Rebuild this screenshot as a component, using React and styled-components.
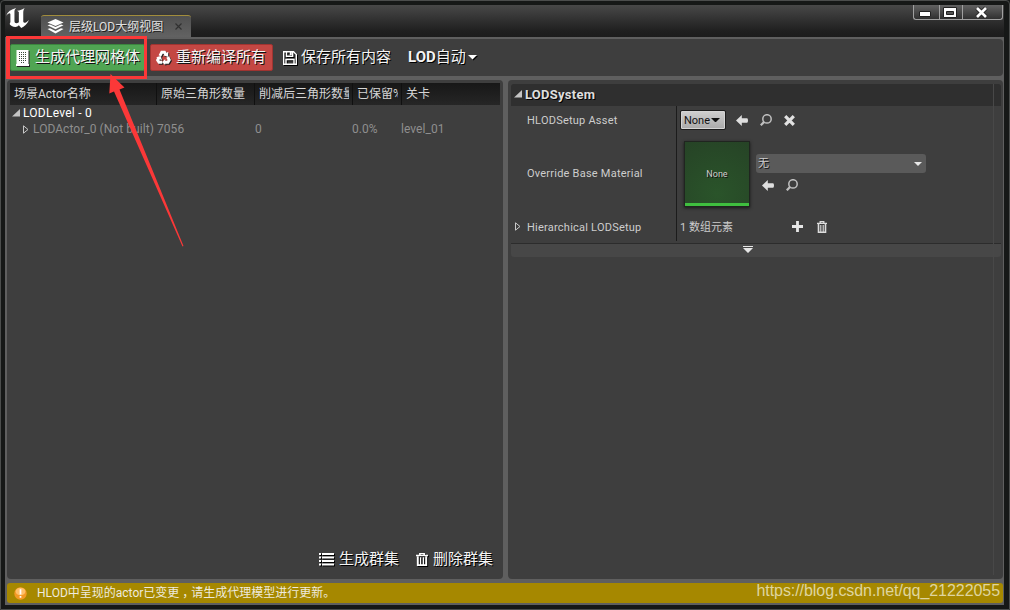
import styled, { createGlobalStyle } from "styled-components";

const GlobalStyle = createGlobalStyle`
    body{
        margin: 0;
        background: #161817;
        overflow: hidden;
    }

    *{
        box-sizing: border-box;
    }

    svg{
        display: block;
        flex-shrink: 0;
    }
`;

const UnrealLogo = () => (
    <svg width="23" height="20" viewBox="0 0 68 60" preserveAspectRatio="none" fill="#fff">
        <path d="M0 24C5 11 15 4 30 0C26 4 25 7 25 11V39C25 46 31 48 38 43V12L33 8C41 8 49 4 55 0C52 5 51 9 51 14V40C51 46 57 47 68 36C63 49 54 55 45 60L38 52C32 59 24 57 17 54C10 51 10 47 13 43V19C12 13 6 17 0 24Z" />
    </svg>
);

const LayersIcon = () => (
    <svg width="17" height="15" viewBox="0 0 17 15" fill="#fff">
        <path d="M8.500 0L16.500 3.500L8.500 7L.500 3.500Z" />
        <path d="M.500 6.200L3 5.400L8.500 8.100L14 5.400L16.500 6.200L8.500 10.300Z" />
        <path d="M.500 10L3 9.200L8.500 11.900L14 9.200L16.500 10L8.500 14.400Z" />
    </svg>
);

const BuildingIcon = () => (
    <svg width="13" height="16" viewBox="0 0 13 16">
        <path d="M.500 0H12.500V14H13V16H0V14H.500Z" fill="#fff" />
        <path d="M3 2.500H11M3 4.500H11M3 6.500H11M3 8.500H11M3 10.500H11M5 12.500H9" stroke="#3b4b3b" strokeDasharray="1 1" />
    </svg>
);

const RecycleIcon = () => (
    <svg width="15" height="15" viewBox="0 0 16 16" fill="none" stroke="#fff" strokeWidth="3.200">
        <path d="M4.200 6.200L6.200 2.300H9L10.500 4.700" />
        <path d="M12.500 7.500L14.100 10.700L12.700 13H9.300" />
        <path d="M6.600 13H3.200L1.800 10.800L3.200 8.200" />
        <path d="M13 1.800V7.400L7.700 5.600ZM9.800 9.500V16L6.500 13ZM.100 7.600L5 6.300L6.400 11Z" fill="#fff" stroke="none" />
    </svg>
);

const SaveIcon = () => (
    <svg width="14" height="14" viewBox="0 0 14 14" fill="none" stroke="#fff" strokeWidth="1.400">
        <path d="M.700 .700H10.500L13.300 3.500V13.300H.700Z" />
        <path d="M3.500 1V5.300H9.700V1M3 13V8.500H11V13" />
        <path d="M7.800 1V4" strokeWidth="2" />
    </svg>
);

const Caret = ({ color = "#fff", size = 8 }) => (
    <svg width={size} height={size / 2} viewBox="0 0 8 4" fill={color}>
        <path d="M0 0H8L4 4Z" />
    </svg>
);

const OpenArrow = () => (
    <svg width="8" height="8" viewBox="0 0 8 8" fill="#c4c4c4">
        <path d="M8 0V7.500H0Z" />
    </svg>
);

const ClosedArrow = () => (
    <svg width="6" height="9" viewBox="0 0 6 9" fill="none" stroke="#c8c8c8">
        <path d="M.500 .800V8.200L5 4.500Z" />
    </svg>
);

const BackIcon = () => (
    <svg width="12" height="11" viewBox="0 0 12 11" fill="#dedede">
        <path d="M0 5.500L5.800 0V3.200H11Q12 3.200 12 5.500Q12 7.800 11 7.800H5.800V11Z" />
    </svg>
);

const SearchIcon = () => (
    <svg width="12" height="12" viewBox="0 0 12 12" fill="none" stroke="#c0c0c0">
        <circle cx="7" cy="4.900" r="4.200" strokeWidth="1.500" />
        <path d="M4 8L.800 11.300" strokeWidth="2.200" />
    </svg>
);

const ClearIcon = () => (
    <svg width="11" height="11" viewBox="0 0 11 11" stroke="#e2e2e2" strokeWidth="3.200">
        <path d="M1.200 1.200L9.800 9.800M9.800 1.200L1.200 9.800" />
    </svg>
);

const PlusIcon = () => (
    <svg width="11" height="11" viewBox="0 0 11 11" stroke="#e6e6e6" strokeWidth="2.800">
        <path d="M5.500 0V11M0 5.500H11" />
    </svg>
);

const TrashIcon = ({ color = "#dcdcdc", width = 10, height = 12 }) => (
    <svg width={width} height={height} viewBox="0 0 10 12" preserveAspectRatio="none" fill="none" stroke={color}>
        <path d="M0 2.300H10M3.200 2V.600H6.800V2" strokeWidth="1.300" />
        <path d="M1.500 3V11.200H8.500V3" strokeWidth="1.600" />
        <path d="M3.800 4V11M6.200 4V11" strokeWidth="1.100" />
    </svg>
);

const ListIcon = () => (
    <svg width="15" height="13" viewBox="0 0 15 13" fill="#fff">
        <path d="M0 0H2V2H0ZM3 0H15V2H3ZM0 3.500H2V5.500H0ZM3 3.500H15V5.500H3ZM0 7H2V9H0ZM3 7H15V9H3ZM0 10.500H2V12.500H0ZM3 10.500H15V12.500H3Z" />
    </svg>
);

const WarningIcon = () => (
    <svg width="13" height="13" viewBox="0 0 13 13">
        <circle cx="6.500" cy="6.500" r="6.200" fill="#f39a25" />
        <ellipse cx="6.500" cy="4.500" rx="4.900" ry="3.800" fill="#ffc069" />
        <path d="M6.500 2.300V7.500M6.500 9V10.800" stroke="#fff" strokeWidth="1.700" />
    </svg>
);

const App = () => {
    return (
        <Window>
            <GlobalStyle />
            <TitleBar>
                <Logo><UnrealLogo /></Logo>
                <Tab>
                    <LayersIcon />
                    <span>层级LOD大纲视图</span>
                    <svg width="7" height="7" viewBox="0 0 7 7" stroke="#303030" strokeWidth="1.200">
                        <path d="M.500 .500L6.500 6.500M6.500 .500L.500 6.500" />
                    </svg>
                </Tab>
                <Controls>
                    <Control $width={26}>
                        <svg width="12" height="6" viewBox="0 0 12 6">
                            <path d="M.500 .500H11.500V5.500H.500Z" fill="#fff" stroke="#222" />
                        </svg>
                    </Control>
                    <Control $width={23}>
                        <svg width="14" height="11" viewBox="0 0 14 11">
                            <path d="M.500 .500H13.500V10.500H.500Z" fill="#fff" stroke="#222" />
                            <path d="M3.500 4.500H10.500V7.500H3.500Z" fill="#555" stroke="#222" />
                        </svg>
                    </Control>
                    <Control $width={41}>
                        <svg width="13" height="13" viewBox="0 0 13 13">
                            <path d="M2 2L11 11M11 2L2 11" stroke="#222" strokeWidth="4.500" />
                            <path d="M2 2L11 11M11 2L2 11" stroke="#fff" strokeWidth="2.700" />
                        </svg>
                    </Control>
                </Controls>
            </TitleBar>

            <Body>
                <Toolbar>
                    <ToolButton $width={135} $gap={6} $color="#50a553" $edge="#3c853f">
                        <BuildingIcon />
                        <span>生成代理网格体</span>
                    </ToolButton>
                    <ToolButton $width={123} $gap={5} $color="#c44743" $edge="#a03431">
                        <RecycleIcon />
                        <span>重新编译所有</span>
                    </ToolButton>
                    <ToolLink $gap={4}>
                        <SaveIcon />
                        <span>保存所有内容</span>
                    </ToolLink>
                    <ToolLink $gap={2}>
                        <span><b>LOD</b>自动</span>
                        <Caret size={9} />
                    </ToolLink>
                </Toolbar>

                <Panels>
                    <Outliner>
                        <TreeHeader>
                            <HeaderCell>场景Actor名称</HeaderCell>
                            <HeaderCell>原始三角形数量</HeaderCell>
                            <HeaderCell>削减后三角形数量</HeaderCell>
                            <HeaderCell>已保留%</HeaderCell>
                            <HeaderCell>关卡</HeaderCell>
                        </TreeHeader>
                        <TreeRow $bright>
                            <NameCell $indent={2} $gap={3}>
                                <OpenArrow />
                                <span>LODLevel - 0</span>
                            </NameCell>
                        </TreeRow>
                        <TreeRow>
                            <NameCell $indent={13} $gap={4}>
                                <ClosedArrow />
                                <span>LODActor_0 (Not built)</span>
                            </NameCell>
                            <span>7056</span>
                            <span>0</span>
                            <span>0.0%</span>
                            <span>level_01</span>
                        </TreeRow>
                        <ClusterActions>
                            <ToolLink $gap={5}>
                                <ListIcon />
                                <span>生成群集</span>
                            </ToolLink>
                            <ToolLink $gap={5}>
                                <TrashIcon color="#fff" width={12} height={13} />
                                <span>删除群集</span>
                            </ToolLink>
                        </ClusterActions>
                    </Outliner>

                    <Details>
                        <DetailsContent>
                            <Category>
                                <OpenArrow />
                                <span>LODSystem</span>
                            </Category>
                            <Property $height={28}>
                                <PropertyName>HLODSetup Asset</PropertyName>
                                <PropertyValue>
                                    <AssetButton>
                                        None
                                        <Caret color="#111" size={9} />
                                    </AssetButton>
                                    <IconRow $gap={12}>
                                        <BackIcon />
                                        <SearchIcon />
                                        <ClearIcon />
                                    </IconRow>
                                </PropertyValue>
                            </Property>
                            <Property $height={78}>
                                <PropertyName>Override Base Material</PropertyName>
                                <PropertyValue>
                                    <Thumbnail>None</Thumbnail>
                                    <MaterialPicker>
                                        <Combo>
                                            <span>无</span>
                                            <Caret color="#e8e8e8" />
                                        </Combo>
                                        <IconRow $gap={12}>
                                            <BackIcon />
                                            <SearchIcon />
                                        </IconRow>
                                    </MaterialPicker>
                                </PropertyValue>
                            </Property>
                            <Property $height={29}>
                                <PropertyName $expandable>
                                    <ClosedArrow />
                                    <span>Hierarchical LODSetup</span>
                                </PropertyName>
                                <PropertyValue>
                                    <ArrayCount>1 数组元素</ArrayCount>
                                    <IconRow $gap={14}>
                                        <PlusIcon />
                                        <TrashIcon />
                                    </IconRow>
                                </PropertyValue>
                            </Property>
                            <Expander>
                                <svg width="10" height="7" viewBox="0 0 10 7" fill="#e6e6e6">
                                    <path d="M0 0H10V1H0ZM0 2H10L5 7Z" />
                                </svg>
                            </Expander>
                        </DetailsContent>
                        <ScrollTrack />
                    </Details>
                </Panels>

                <StatusBar>
                    <WarningIcon />
                    <Message>HLOD中呈现的actor已变更<Comma>，</Comma>请生成代理模型进行更新。</Message>
                    <Watermark>https://blog.csdn.net/qq_21222055</Watermark>
                </StatusBar>
            </Body>

            <Highlight />
            <Pointer width="76" height="176" viewBox="0 0 76 176" fill="#fb3838">
                <path d="M2.500 2L16.500 15.500L11.500 17.500L75.500 174L74.500 174.500L6 19.500L1.300 21.500Z" />
            </Pointer>
        </Window>
    );
};

const Window = styled.div`
    position: relative;
    display: flex;
    flex-direction: column;
    width: 1010px;
    height: 610px;
    padding: 4px 5px 4px 4px;
    border: 1px solid #4b4d4c;
    border-radius: 4px 4px 0 0;
    background: #161817;
    font-family: Roboto, "Noto Sans CJK SC", sans-serif;
    font-size: 12px;
    color: #e0e0e0;
    white-space: nowrap;
`;

const TitleBar = styled.div`
    display: flex;
    height: 32px;
    background: linear-gradient(#484848, #202020 80%, #1c1c1c);
`;

const Logo = styled.div`
    width: 36px;
    padding: 3px 0 0 1px;
`;

const Tab = styled.div`
    display: flex;
    align-items: center;
    width: 150px;
    height: 22px;
    margin-top: 10px;
    padding-left: 6px;
    border-top: 1px solid #a28d3c;
    border-radius: 3px 3px 0 0;
    background: linear-gradient(#505050, #626262);
    text-shadow: 1px 1px #202020;

    span{
        width: 95px;
        margin: 0 11px 0 5px;
        padding-bottom: 3px;
    }
`;

const Controls = styled.div`
    display: flex;
    height: 15px;
    margin: 0 1px 0 auto;
`;

const Control = styled.div`
    display: flex;
    align-items: center;
    justify-content: center;
    width: ${(props) => props.$width}px;
    padding: 1px 3px 0 0;
    border: 1px solid #a0a0a0;
    border-top: 0;
    border-right-width: 0;
    background: linear-gradient(#626262, #303030);

    &:first-child{
        padding: 4px 3px 0 0;
        border-bottom-left-radius: 3px;
    }

    &:nth-child(2){
        padding-right: 2px;
    }

    &:last-child{
        border-right-width: 1px;
        border-bottom-right-radius: 3px;
    }
`;

const Body = styled.div`
    display: flex;
    flex-direction: column;
    flex: 1;
    padding: 2px 1px 2px 2px;
    background: #5f5f5f;
`;

const Toolbar = styled.div`
    display: flex;
    align-items: center;
    height: 37px;
    padding-left: 3px;
    border-radius: 4px;
    background: #3e3e3e;
`;

const ToolButton = styled.div`
    display: flex;
    align-items: center;
    gap: ${(props) => props.$gap}px;
    width: ${(props) => props.$width}px;
    height: 27px;
    margin-right: 5px;
    padding-left: 5px;
    border: 1px solid ${(props) => props.$edge};
    border-radius: 2px;
    background: ${(props) => props.$color};
    color: #f4f4f4;
    font-size: 15px;
    text-shadow: 1px 1px #111;

    span{
        padding-bottom: 4px;
    }

    svg{
        filter: drop-shadow(1px 1px 0 #222);
    }
`;

const ToolLink = styled.div`
    display: flex;
    align-items: center;
    gap: ${(props) => props.$gap}px;
    margin: 0 12px 0 5px;
    color: #f4f4f4;
    font-size: 15px;
    text-shadow: 1px 1px #000;

    span{
        padding-bottom: 4px;
    }

    svg{
        filter: drop-shadow(1px 1px 0 #000);
    }
`;

const Panels = styled.div`
    display: grid;
    grid-template-columns: 496px 1fr;
    gap: 5px;
    height: 499px;
    margin-top: 4px;
`;

const Outliner = styled.div`
    display: flex;
    flex-direction: column;
    padding: 3px;
    border-radius: 4px;
    background: #3e3e3e;
`;

const TreeHeader = styled.div`
    display: grid;
    grid-template-columns: 146px 98px 98px 49px 1fr;
    height: 22px;
    background: linear-gradient(#171717, #262626);
`;

const HeaderCell = styled.div`
    padding-left: 4px;
    line-height: 22px;
    overflow: hidden;
    border-left: 1px solid #101010;
    border-right: 3px solid transparent;
    color: #d6d6d6;

    &:first-child{
        border-left: 0;
    }
`;

const TreeRow = styled.div`
    display: grid;
    grid-template-columns: 147px 98px 97px 49px 1fr;
    height: 16px;
    line-height: 16px;
    color: ${(props) => (props.$bright ? "#fff" : "#8f8f8f")};
    letter-spacing: ${(props) => (props.$bright ? ".25px" : ".05px")};
`;

const NameCell = styled.div`
    display: flex;
    align-items: center;
    gap: ${(props) => props.$gap}px;
    padding-left: ${(props) => props.$indent}px;
`;

const ClusterActions = styled.div`
    display: flex;
    justify-content: flex-end;
    margin-top: auto;
    padding-bottom: 4px;

    ${ToolLink}:last-child{
        margin-right: 7px;
    }
`;

const Details = styled.div`
    display: grid;
    grid-template-columns: 490px;
    padding: 4px 2px 4px 3px;
    border-radius: 4px;
    background: #3e3e3e;
    font-size: 11px;
    position: relative;
`;

const DetailsContent = styled.div`
    color: #cdcdcd;
`;

const Category = styled.div`
    display: flex;
    align-items: center;
    gap: 3px;
    height: 22px;
    padding: 0 0 2px 3px;
    border-radius: 3px 3px 0 0;
    background: #2f2f2f;
    color: #dedede;
    font-size: 13px;
    font-weight: 700;
    letter-spacing: .25px;
    text-shadow: 1px 1px #000;
`;

const Property = styled.div`
    display: grid;
    grid-template-columns: 166px 1fr;
    height: ${(props) => props.$height}px;
`;

const PropertyName = styled.div`
    display: flex;
    align-items: center;
    gap: 6px;
    padding-left: ${(props) => (props.$expandable ? 4 : 16)}px;
    border-right: 1px solid #1c1c1c;
    letter-spacing: .23px;

    span{
        padding-top: 1px;
    }
`;

const PropertyValue = styled.div`
    display: flex;
    align-items: center;
    padding-left: 3px;
`;

const AssetButton = styled.div`
    display: flex;
    align-items: center;
    gap: 1px;
    width: 46px;
    height: 20px;
    margin-right: 10px;
    padding-left: 3px;
    border: 1px solid #1d1d1d;
    border-radius: 2px;
    background: linear-gradient(#d0d0d0, #a9a9a9);
    box-shadow: inset 0 0 0 1px #d4d4d4;
    color: #111;
`;

const IconRow = styled.div`
    display: flex;
    align-items: center;
    gap: ${(props) => props.$gap}px;
`;

const Thumbnail = styled.div`
    display: flex;
    align-items: center;
    justify-content: center;
    width: 64px;
    height: 64px;
    margin: 1px 7px 0 5px;
    padding-top: 3px;
    border-bottom: 3px solid #3fbf3f;
    background: radial-gradient(circle at 50% 85%, #2a542a, #264326);
    box-shadow: 0 0 0 1px #202520, 0 1px 3px 1px #181818;
    font-size: 9px;
    text-shadow: 1px 1px #111;
`;

const MaterialPicker = styled.div`
    display: flex;
    flex-direction: column;
    gap: 6px;
    padding-bottom: 1px;

    ${IconRow}{
        padding-left: 6px;
    }
`;

const Combo = styled.div`
    display: flex;
    align-items: center;
    justify-content: space-between;
    width: 170px;
    height: 19px;
    padding: 0 4px 0 2px;
    border-radius: 3px;
    background: #5a5a5a;
    text-shadow: 1px 1px #111;

    span{
        padding-bottom: 4px;
    }
`;

const ArrayCount = styled.div`
    width: 112px;
    padding-bottom: 1px;
`;

const Expander = styled.div`
    display: flex;
    justify-content: center;
    height: 14px;
    margin-top: 2px;
    padding: 2px 16px 0 0;
    border-top: 1px solid #2c2c2c;
    border-radius: 0 0 3px 3px;
    background: #474747;
`;

/* thin rule along the scroll gutter, runs over the rows */
const ScrollTrack = styled.div`
    position: absolute;
    top: 4px;
    bottom: 4px;
    right: 9px;
    width: 1px;
    background: #484848;
`;

const StatusBar = styled.div`
    display: flex;
    align-items: center;
    gap: 10px;
    height: 20px;
    margin-top: 4px;
    padding: 0 3px 0 7px;
    border-radius: 3px;
    background: #a68800;
    color: #eeeade;
`;

const Message = styled.div`
    padding-bottom: 3px;
`;

const Comma = styled.span`
    margin-right: -3px;
    padding-left: 3px;
`;

const Watermark = styled.div`
    margin-left: auto;
    padding-bottom: 4px;
    color: #dfd59f;
    font-family: "Liberation Sans", sans-serif;
    font-size: 16px;
    letter-spacing: -.06px;
`;

const Highlight = styled.div`
    position: absolute;
    left: 5px;
    top: 35px;
    width: 141px;
    height: 43px;
    border: 3px solid #fb3838;
    border-left-width: 4px;
`;

const Pointer = styled.svg`
    position: absolute;
    left: 107px;
    top: 71px;
`;

export default App;
